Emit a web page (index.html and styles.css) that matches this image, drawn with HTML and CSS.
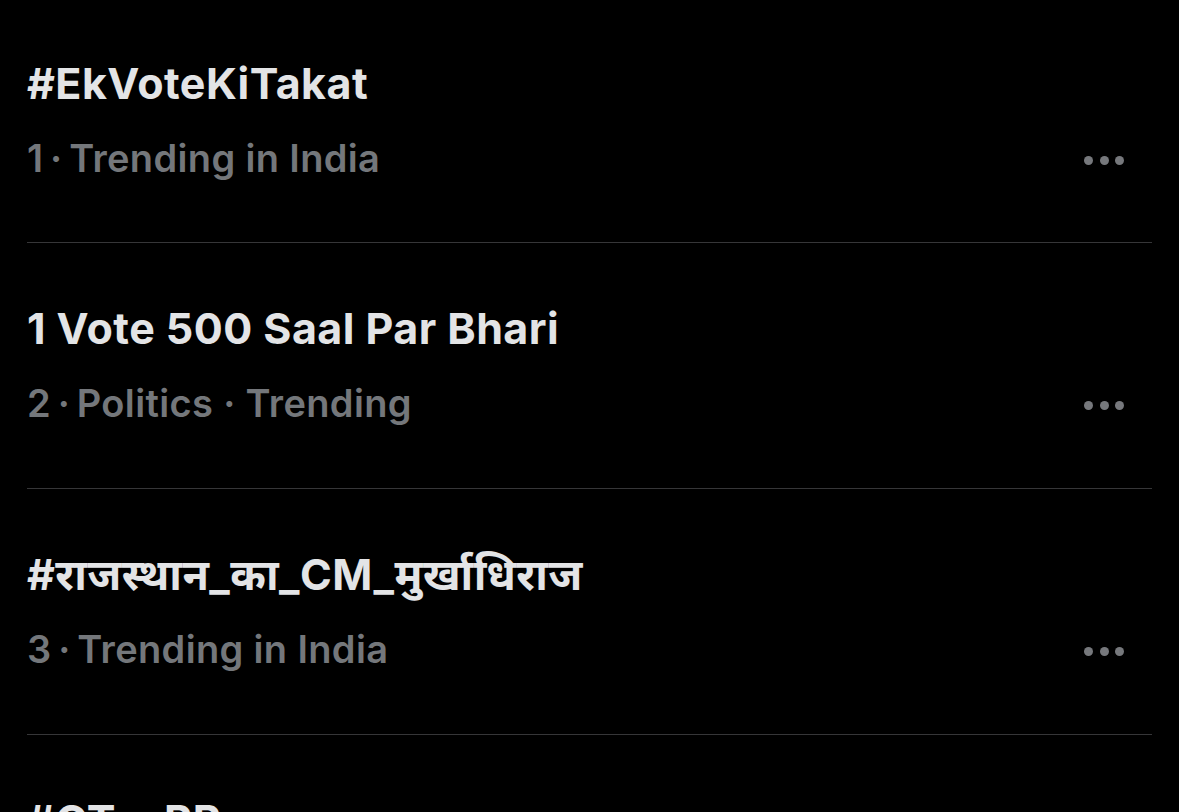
FILE: index.html
```html
<!DOCTYPE html>
<html lang="en">
<head>
    <meta charset="UTF-8">
    <meta name="viewport" content="width=device-width, initial-scale=1.0">
    <title>Trending</title>
    <link rel="stylesheet" href="styles.css">
</head>
<body>
    <div class="trends">
        <div class="trend">
            <div class="trend-title">#EkVoteKiTakat</div>
            <div class="trend-meta">
                <span>1&thinsp;·&thinsp;Trending in India</span>
                <span class="more"><i></i><i></i><i></i></span>
            </div>
        </div>

        <div class="trend">
            <div class="trend-title">1 Vote 500 Saal Par Bhari</div>
            <div class="trend-meta">
                <span>2&thinsp;·&thinsp;Politics · Trending</span>
                <span class="more"><i></i><i></i><i></i></span>
            </div>
        </div>

        <div class="trend">
            <div class="trend-title">#राजस्थान_का_CM_मुर्खाधिराज</div>
            <div class="trend-meta">
                <span>3&thinsp;·&thinsp;Trending in India</span>
                <span class="more"><i></i><i></i><i></i></span>
            </div>
        </div>

        <div class="trend">
            <div class="trend-title">#GTvsRR</div>
            <div class="trend-meta">
                <span>4&thinsp;·&thinsp;Sports · Trending</span>
                <span class="more"><i></i><i></i><i></i></span>
            </div>
        </div>
    </div>
</body>
</html>
```

FILE: styles.css
```css
html, body {
    height: 100%;
}
body {
    margin: 0;
    padding: 0;
    background-color: #000;
    color: #e3e4e6;
    font-family: Inter, "Noto Sans", "Noto Sans Devanagari", "Lohit Devanagari", FreeSans, sans-serif;
    overflow: hidden;
}
.trends {
    padding-left: 27px;
    padding-right: 27px;
}
.trend {
    padding-top: 60px;
    padding-bottom: 62px;
    border-bottom: 1px solid #363638;
}
.trend:first-child {
    padding-top: 58px;
    padding-bottom: 61px;
}
.trend-title {
    font-size: 43px;
    line-height: 50px;
    font-weight: 700;
    letter-spacing: 0.45px;
    white-space: nowrap;
}
.trend-meta {
    margin-top: 27px;
    display: flex;
    align-items: center;
    justify-content: space-between;
    font-size: 38px;
    line-height: 46px;
    font-weight: 600;
    letter-spacing: 0.35px;
    color: #74777b;
}
.more {
    display: flex;
    gap: 6.5px;
    margin-top: 4px;
    margin-right: 28px;
}
.more i {
    display: block;
    width: 9px;
    height: 9px;
    border-radius: 50%;
    background-color: #76787c;
}
```
